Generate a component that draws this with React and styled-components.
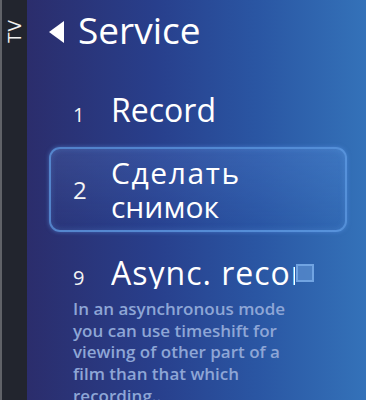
import React from "react"
import styled, { createGlobalStyle } from "styled-components"

const GlobalStyle = createGlobalStyle`
  html, body {
    margin: 0;
    padding: 0;
    background: #22252e;
  }
  body {
    font-family: "Open Sans", "DejaVu Sans", sans-serif;
  }
`

const Screen = styled.div`
  display: flex;
  width: 366px;
  height: 400px;
  overflow: hidden;
`

const Sidebar = styled.div`
  flex: 0 0 25px;
  border-left: 2px solid #606268;
  background: #22252e;
  display: flex;
  justify-content: center;
  padding-top: 19px;
`

const SideLabel = styled.div`
  writing-mode: vertical-rl;
  transform: rotate(180deg);
  height: 27px;
  color: #f2f2f2;
  font-size: 19px;
  line-height: 1;
  letter-spacing: 1px;
  text-align: right;
`

const Main = styled.div`
  flex: 1;
  background: linear-gradient(90deg, #2b2d6c 0%, #283f8c 38%, #2a56a3 68%, #3472b9 100%);
  display: flex;
  flex-direction: column;
`

const Header = styled.div`
  display: flex;
  align-items: center;
  gap: 14px;
  padding: 14px 0 0 22px;
  height: 37px;
`

const BackArrow = styled.div`
  width: 0;
  height: 0;
  border-top: 11px solid transparent;
  border-bottom: 11px solid transparent;
  border-right: 15px solid #ffffff;
  margin-top: 2px;
`

const Title = styled.div`
  color: #ffffff;
  font-size: 37px;
  line-height: 1;
  font-weight: 500;
  margin-top: -3px;
`

const Menu = styled.div`
  display: flex;
  flex-direction: column;
  padding: 0 19px 0 22px;
`

const Item = styled.div`
  display: flex;
  align-items: ${p => (p.$center ? "center" : "baseline")};
  padding-left: 24px;
  margin-top: ${p => p.$top}px;
  ${p =>
    p.$selected &&
    `
    height: 81px;
    padding-left: 22px;
    border: 2px solid rgba(96, 156, 228, 0.75);
    border-radius: 11px;
    box-shadow: 0 0 4px rgba(90, 150, 230, 0.55), inset 0 0 6px rgba(110, 170, 240, 0.25);
    background: linear-gradient(180deg, rgba(110, 160, 240, 0.2), rgba(40, 80, 170, 0.12));
  `}
`

const Num = styled.span`
  flex: 0 0 38px;
  color: #f4f4f4;
  font-size: ${p => p.$size}px;
  line-height: 1;
`

const Label = styled.div`
  color: #ffffff;
  font-size: ${p => p.$size}px;
  font-weight: ${p => p.$weight};
  line-height: ${p => p.$lh || 1};
  letter-spacing: ${p => p.$spacing || 0}px;
  white-space: nowrap;
  overflow: hidden;
  width: ${p => (p.$width ? `${p.$width}px` : "auto")};
`

const Line = styled.span`
  display: block;
  letter-spacing: ${p => p.$spacing || 0}px;
`

const Check = styled.span`
  flex: 0 0 auto;
  box-sizing: border-box;
  width: 18px;
  height: 18px;
  margin-left: 1px;
  align-self: flex-start;
  margin-top: 7px;
  border: 2px solid rgba(120, 170, 230, 0.85);
  background: rgba(90, 140, 205, 0.75);
`

const Description = styled.div`
  color: #8ea6d6;
  font-size: 17px;
  font-weight: 600;
  line-height: 21.7px;
  padding: 9px 0 0 24px;
  width: 226px;
`

export default function App() {
  return (
    <>
      <GlobalStyle />
      <Screen>
        <Sidebar>
          <SideLabel>TV</SideLabel>
        </Sidebar>
        <Main>
          <Header>
            <BackArrow />
            <Title>Service</Title>
          </Header>
          <Menu>
            <Item $top={46}>
              <Num $size={20}>1</Num>
              <Label $size={32} $weight={500}>Record</Label>
            </Item>
            <Item $top={21} $selected $center>
              <Num $size={24}>2</Num>
              <Label $size={30} $weight={400} $lh={1.13}>
                <Line $spacing={1.6}>Сделать</Line>
                <Line>снимок</Line>
              </Label>
            </Item>
            <Item $top={25}>
              <Num $size={20}>9</Num>
              <Label $size={32} $weight={500} $width={184} $spacing={1}>Async. record</Label>
              <Check />
            </Item>
            <Description>
              In an asynchronous mode you can use timeshift for viewing of other part of a film than that which recording..
            </Description>
          </Menu>
        </Main>
      </Screen>
    </>
  )
}
